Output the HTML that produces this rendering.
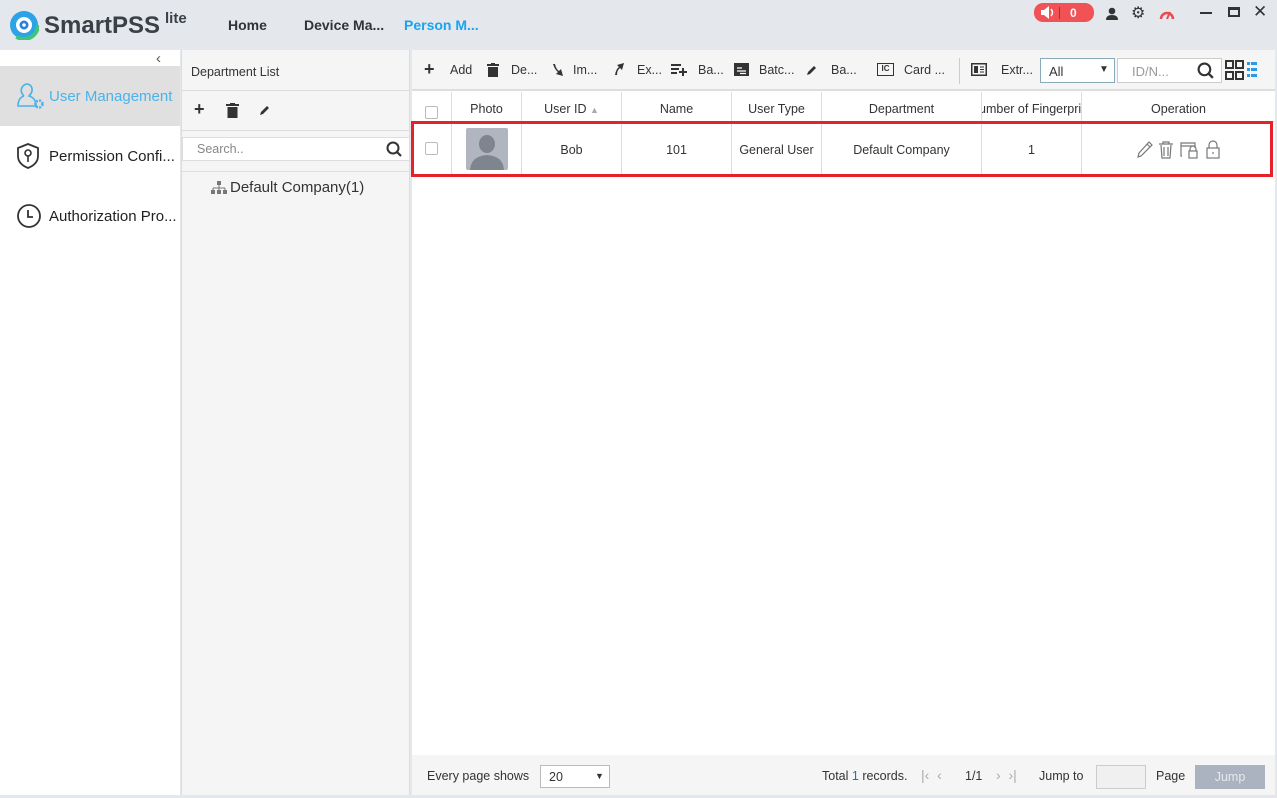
<!DOCTYPE html>
<html><head><meta charset="utf-8"><style>
*{box-sizing:border-box;margin:0;padding:0}
body{width:1277px;height:798px;overflow:hidden;background:#e4e7ec;font-family:"Liberation Sans",sans-serif;font-size:13px;color:#333;position:relative}
.a{position:absolute}
.top{left:0;top:0;width:1277px;height:50px;background:#e4e7ec}
.nav{font-weight:bold;font-size:14px;top:17px;color:#333}
.side{left:0;top:50px;width:180px;height:745px;background:#fff}
.si{left:0;width:180px;height:60px;display:flex;align-items:center;padding-left:16px;font-size:15px;color:#222;white-space:nowrap;overflow:hidden}
.dept{left:181px;top:50px;width:229px;height:745px;background:#f5f5f5;border-left:1px solid #ddd;border-right:1px solid #ddd}
.main{left:412px;top:50px;width:863px;height:745px;background:#fff}
.tb{left:0;top:0;width:863px;height:41px;background:#f5f5f5;border-bottom:2px solid #ddd}
.ti{top:13px;font-size:12.5px;color:#333}
.th{top:42px;height:30px;padding-top:2px;border-bottom:1px solid #ddd;border-right:1px solid #ddd;text-align:center;line-height:30px;font-size:12.5px;background:#fff}
.td{top:73px;height:52px;border-right:1px solid #ddd;text-align:center;line-height:54px;font-size:12.5px}
.cb{width:13px;height:13px;border:1px solid #bbb;border-radius:2px;background:#fff}
.foot{left:0;top:705px;width:863px;height:40px;background:#f5f5f5;font-size:12.5px}
</style></head><body>
<div class="a top">
 <svg class="a" style="left:9px;top:10px" width="30" height="30" viewBox="0 0 30 30"><circle cx="15" cy="15" r="14" fill="#2ba3e6"/><circle cx="15" cy="15" r="14" fill="none" stroke="#3fc57a" stroke-width="4" stroke-dasharray="30 60"/><circle cx="15" cy="15" r="8" fill="#fff"/><circle cx="15" cy="15" r="4.5" fill="#2b7fe0"/><circle cx="15" cy="15" r="1.8" fill="#fff"/></svg>
 <div class="a" style="left:44px;top:12px;font-size:24px;font-weight:bold;color:#3a3f48">SmartPSS</div>
 <div class="a" style="left:165px;top:10px;font-size:15px;font-weight:bold;color:#3a3f48">lite</div>
 <div class="a nav" style="left:228px">Home</div>
 <div class="a nav" style="left:304px">Device Ma...</div>
 <div class="a nav" style="left:404px;color:#1aa3f0">Person M...</div>
 <div class="a" style="left:1034px;top:3px;width:60px;height:19px;background:#f05256;border-radius:9px;color:#fff;font-size:12px;font-weight:bold">
  <svg class="a" style="left:6px;top:3px" width="15" height="13" viewBox="0 0 15 13"><path d="M1 4 H4 L9 0 V13 L4 9 H1Z" fill="#fff"/><path d="M11 3 Q14 6.5 11 10" stroke="#fff" stroke-width="1.5" fill="none"/></svg>
  <div class="a" style="left:25px;top:4px;width:1px;height:12px;background:#b02a2e"></div>
  <span class="a" style="left:36px;top:3px">0</span></div>
 <svg class="a" style="left:1105px;top:7px" width="14" height="13" viewBox="0 0 14 13"><circle cx="7" cy="4" r="3.3" fill="#333"/><path d="M1 13 Q1 8 7 8 Q13 8 13 13Z" fill="#333"/></svg>
 <div class="a" style="left:1131px;top:3px;font-size:16px;color:#333">⚙</div>
 <svg class="a" style="left:1159px;top:7px" width="16" height="13" viewBox="0 0 16 13"><path d="M2 12 A6 6 0 1 1 14 12" fill="none" stroke="#e84a4f" stroke-width="2.5"/><path d="M8 12 L11 5" stroke="#e84a4f" stroke-width="2"/></svg>
 <div class="a" style="left:1200px;top:12px;width:12px;height:2px;background:#333"></div>
 <div class="a" style="left:1228px;top:7px;width:12px;height:10px;border:2px solid #333;border-top-width:3px"></div>
 <div class="a" style="left:1253px;top:2px;font-size:17px;color:#333">✕</div>
</div>
<div class="a side">
 <div class="a" style="left:156px;top:0;font-size:15px;color:#555">‹</div>
 <div class="a si" style="top:16px;background:#e0e0e0;color:#4ab3ea"><svg width="30" height="28" viewBox="0 0 30 28" style="margin-right:3px"><path d="M8 14 Q3 9 7 4 Q11 0 15 4 Q18 9 13 14 Q20 16 20 24 L2 24 Q2 16 8 14" fill="none" stroke="#4ab3ea" stroke-width="1.6"/><circle cx="23" cy="22" r="3.5" fill="none" stroke="#4ab3ea" stroke-width="2.5" stroke-dasharray="2 1.3"/></svg>User Management</div>
 <div class="a si" style="top:76px"><svg width="26" height="28" viewBox="0 0 26 28" style="margin-right:7px"><path d="M12 2 L22 6 L22 14 Q22 22 12 26 Q2 22 2 14 L2 6Z" fill="none" stroke="#333" stroke-width="1.8"/><circle cx="12" cy="11" r="3" fill="none" stroke="#333" stroke-width="1.6"/><path d="M12 14 V20" stroke="#333" stroke-width="1.6"/></svg>Permission Confi...</div>
 <div class="a si" style="top:136px"><svg width="26" height="26" viewBox="0 0 26 26" style="margin-right:7px"><circle cx="13" cy="13" r="11" fill="none" stroke="#333" stroke-width="1.8"/><path d="M12 7 V14 H17" fill="none" stroke="#333" stroke-width="1.8"/></svg>Authorization Pro...</div>
</div>
<div class="a dept">
 <div class="a" style="left:9px;top:15px;font-size:12.5px">Department List</div>
 <div class="a" style="left:0;top:40px;width:228px;height:1px;background:#ddd"></div>
 <div class="a" style="left:12px;top:49px;font-size:18px;font-weight:bold">+</div>
 <svg class="a" style="left:44px;top:53px" width="13" height="15" viewBox="0 0 13 15"><rect x="0" y="1" width="13" height="2" fill="#333"/><rect x="4" y="0" width="5" height="2" fill="#333"/><rect x="1.5" y="4" width="10" height="11" fill="#333"/></svg>
 <svg class="a" style="left:77px;top:54px" width="12" height="12" viewBox="0 0 12 12"><path d="M1 11 L2 8 L8 2 L10 4 L4 10Z" fill="#333"/></svg>
 <div class="a" style="left:0;top:80px;width:228px;height:1px;background:#ddd"></div>
 <div class="a" style="left:0;top:87px;width:228px;height:24px;background:#fff;border:1px solid #ddd"><span class="a" style="left:14px;top:4px;color:#888;font-size:12.5px">Search..</span><svg class="a" style="left:203px;top:3px" width="17" height="17" viewBox="0 0 17 17"><circle cx="7" cy="7" r="5.5" fill="none" stroke="#333" stroke-width="2"/><path d="M11 11 L15 15" stroke="#333" stroke-width="2.2"/></svg></div>
 <div class="a" style="left:0;top:121px;width:228px;height:1px;background:#ddd"></div>
 <svg class="a" style="left:29px;top:131px" width="16" height="13" viewBox="0 0 16 13"><rect x="6" y="0" width="4" height="4" fill="#777"/><path d="M8 4 V7 M2 7 H14 M2 7 V9 M8 7 V9 M14 7 V9" stroke="#777"/><rect x="0" y="9" width="4" height="4" fill="#777"/><rect x="6" y="9" width="4" height="4" fill="#777"/><rect x="12" y="9" width="4" height="4" fill="#777"/></svg>
 <div class="a" style="left:48px;top:129px;font-size:15px">Default Company(1)</div>
</div>
<div class="a main">
 <div class="a tb">
  <div class="a ti" style="left:12px;top:9px;font-size:18px;font-weight:bold">+</div><div class="a ti" style="left:38px">Add</div>
  <svg class="a" style="left:75px;top:13px" width="12" height="14" viewBox="0 0 12 14"><rect x="0" y="1" width="12" height="2" fill="#333"/><rect x="4" y="0" width="4" height="2" fill="#333"/><rect x="1" y="4" width="10" height="10" fill="#333"/></svg><div class="a ti" style="left:99px">De...</div>
  <svg class="a" style="left:138px;top:13px" width="14" height="14" viewBox="0 0 14 14"><path d="M3 1 Q5 7 8 9 L6 11 L13 13 L11 6 L9 8 Q6 6 5 1Z" fill="#333"/></svg><div class="a ti" style="left:161px">Im...</div>
  <svg class="a" style="left:199px;top:12px" width="14" height="14" viewBox="0 0 14 14"><path d="M4 13 Q5 7 8 5 L6 3 L13 1 L11 8 L9 6 Q6 8 6 13Z" fill="#333"/></svg><div class="a ti" style="left:225px">Ex...</div>
  <svg class="a" style="left:259px;top:13px" width="16" height="13" viewBox="0 0 16 13"><path d="M0 2 H10 M0 6 H8 M0 10 H6 M12 5 V13 M8 9 H16" stroke="#333" stroke-width="2"/></svg><div class="a ti" style="left:286px">Ba...</div>
  <svg class="a" style="left:322px;top:13px" width="15" height="13" viewBox="0 0 15 13"><rect x="0" y="0" width="15" height="13" fill="#333"/><path d="M3 5 H8 M3 8 H12 M6 10.5 H12" stroke="#fff" stroke-width="1.2"/></svg><div class="a ti" style="left:347px">Batc...</div>
  <svg class="a" style="left:394px;top:14px" width="12" height="12" viewBox="0 0 12 12"><path d="M1 11 L2 8 L8 2 L10 4 L4 10Z" fill="#333"/></svg><div class="a ti" style="left:419px">Ba...</div>
  <div class="a" style="left:465px;top:13px;width:17px;height:13px;border:1.5px solid #333;font-size:8px;text-align:center;line-height:10px;font-weight:bold">IC</div><div class="a ti" style="left:492px">Card ...</div>
  <div class="a" style="left:547px;top:8px;width:1px;height:26px;background:#ccc"></div>
  <svg class="a" style="left:559px;top:13px" width="16" height="13" viewBox="0 0 16 13"><rect x="0.75" y="0.75" width="14.5" height="11.5" fill="none" stroke="#333" stroke-width="1.5"/><rect x="3" y="3" width="4" height="7" fill="#333"/><path d="M9 4 H13 M9 6.5 H13 M9 9 H13" stroke="#333"/></svg><div class="a ti" style="left:589px">Extr...</div>
  <div class="a" style="left:628px;top:8px;width:75px;height:25px;background:#fff;border:1px solid #8ab"><span class="a" style="left:8px;top:5px">All</span><span class="a" style="left:58px;top:5px;font-size:10px">▼</span></div>
  <div class="a" style="left:705px;top:8px;width:105px;height:25px;background:#fff;border:1px solid #ccc"><span class="a" style="left:14px;top:5px;color:#999">ID/N...</span><svg class="a" style="left:79px;top:3px" width="18" height="18" viewBox="0 0 17 17"><circle cx="7" cy="7" r="5.5" fill="none" stroke="#333" stroke-width="2"/><path d="M11 11 L15 15" stroke="#333" stroke-width="2.2"/></svg></div>
  <svg class="a" style="left:813px;top:10px" width="32" height="20" viewBox="0 0 32 20"><g fill="none" stroke="#333" stroke-width="2"><rect x="1" y="1" width="7" height="7"/><rect x="11" y="1" width="7" height="7"/><rect x="1" y="12" width="7" height="7"/><rect x="11" y="12" width="7" height="7"/></g><g fill="#2a9ae8"><rect x="22" y="2" width="3" height="3"/><rect x="26" y="2" width="6" height="3"/><rect x="22" y="8" width="3" height="3"/><rect x="26" y="8" width="6" height="3"/><rect x="22" y="14" width="3" height="3"/><rect x="26" y="14" width="6" height="3"/></g></svg>
 </div>
 <div class="a th" style="left:0;width:40px"><div class="a cb" style="left:13px;top:14px"></div></div>
 <div class="a th" style="left:40px;width:70px">Photo</div>
 <div class="a th" style="left:110px;width:100px">User ID <span style="color:#aaa;font-size:9px">▲</span></div>
 <div class="a th" style="left:210px;width:110px">Name</div>
 <div class="a th" style="left:320px;width:90px">User Type</div>
 <div class="a th" style="left:410px;width:160px">Department</div>
 <div class="a th" style="left:570px;width:100px;overflow:hidden;white-space:nowrap;text-align:left"><span style="margin-left:-12px">Number of Fingerprint</span></div>
 <div class="a th" style="left:670px;width:193px;border-right:0">Operation</div>
 <div class="a td" style="left:0;width:40px"><div class="a cb" style="left:13px;top:19px"></div></div>
 <div class="a td" style="left:40px;width:70px"><svg class="a" style="left:14px;top:5px" width="42" height="42" viewBox="0 0 42 42"><rect width="42" height="42" rx="2" fill="#b0b5bf"/><ellipse cx="21" cy="16" rx="8" ry="9" fill="#7f858f"/><path d="M4 42 Q5 28 21 27 Q37 28 38 42Z" fill="#7f858f"/></svg></div>
 <div class="a td" style="left:110px;width:100px">Bob</div>
 <div class="a td" style="left:210px;width:110px">101</div>
 <div class="a td" style="left:320px;width:90px">General User</div>
 <div class="a td" style="left:410px;width:160px">Default Company</div>
 <div class="a td" style="left:570px;width:100px">1</div>
 <div class="a td" style="left:670px;width:193px;border-right:0">
  <svg class="a" style="left:53px;top:17px" width="90" height="20" viewBox="0 0 90 20"><g fill="none" stroke="#777" stroke-width="1.2"><path d="M3 17 L4 13 L14 2 L17 5 L6 16Z M12 4 L15 7"/><path d="M24 4 H38 M28 4 V2 H34 V4 M26 5 L27 18 H35 L36 5 M29 7 V16 M33 7 V16"/><path d="M47 16 H46 V3 H60 V8 M46 6 H60"/><rect x="54" y="11" width="8" height="7"/><path d="M55 11 V9 A3 3 0 0 1 61 9 V11"/><rect x="72" y="8" width="12" height="10"/><path d="M74 8 V5 A4 4 0 0 1 82 5 V8"/><path d="M78 12 V14"/></g></svg>
 </div>
 <div class="a" style="left:-1px;top:71px;width:862px;height:56px;border:3px solid #e8202a"></div>
 <div class="a foot">
  <div class="a" style="left:15px;top:14px">Every page shows</div>
  <div class="a" style="left:128px;top:10px;width:70px;height:23px;background:#fff;border:1px solid #bbb"><span class="a" style="left:8px;top:4px">20</span><span class="a" style="left:54px;top:5px;font-size:9px">▼</span></div>
  <div class="a" style="left:410px;top:14px">Total <span style="color:#1e6fc8">1</span> records.</div>
  <div class="a" style="left:509px;top:12px;color:#aaa;font-size:14px">|‹ &nbsp;‹</div>
  <div class="a" style="left:553px;top:14px">1/1</div>
  <div class="a" style="left:584px;top:12px;color:#aaa;font-size:14px">› &nbsp;›|</div>
  <div class="a" style="left:627px;top:14px">Jump to</div>
  <div class="a" style="left:684px;top:10px;width:50px;height:24px;background:#f0f0f0;border:1px solid #ccc"></div>
  <div class="a" style="left:744px;top:14px">Page</div>
  <div class="a" style="left:783px;top:10px;width:70px;height:24px;background:#aab3bf;color:#e6e9ed;text-align:center;line-height:24px">Jump</div>
 </div>
</div>
</body></html>
